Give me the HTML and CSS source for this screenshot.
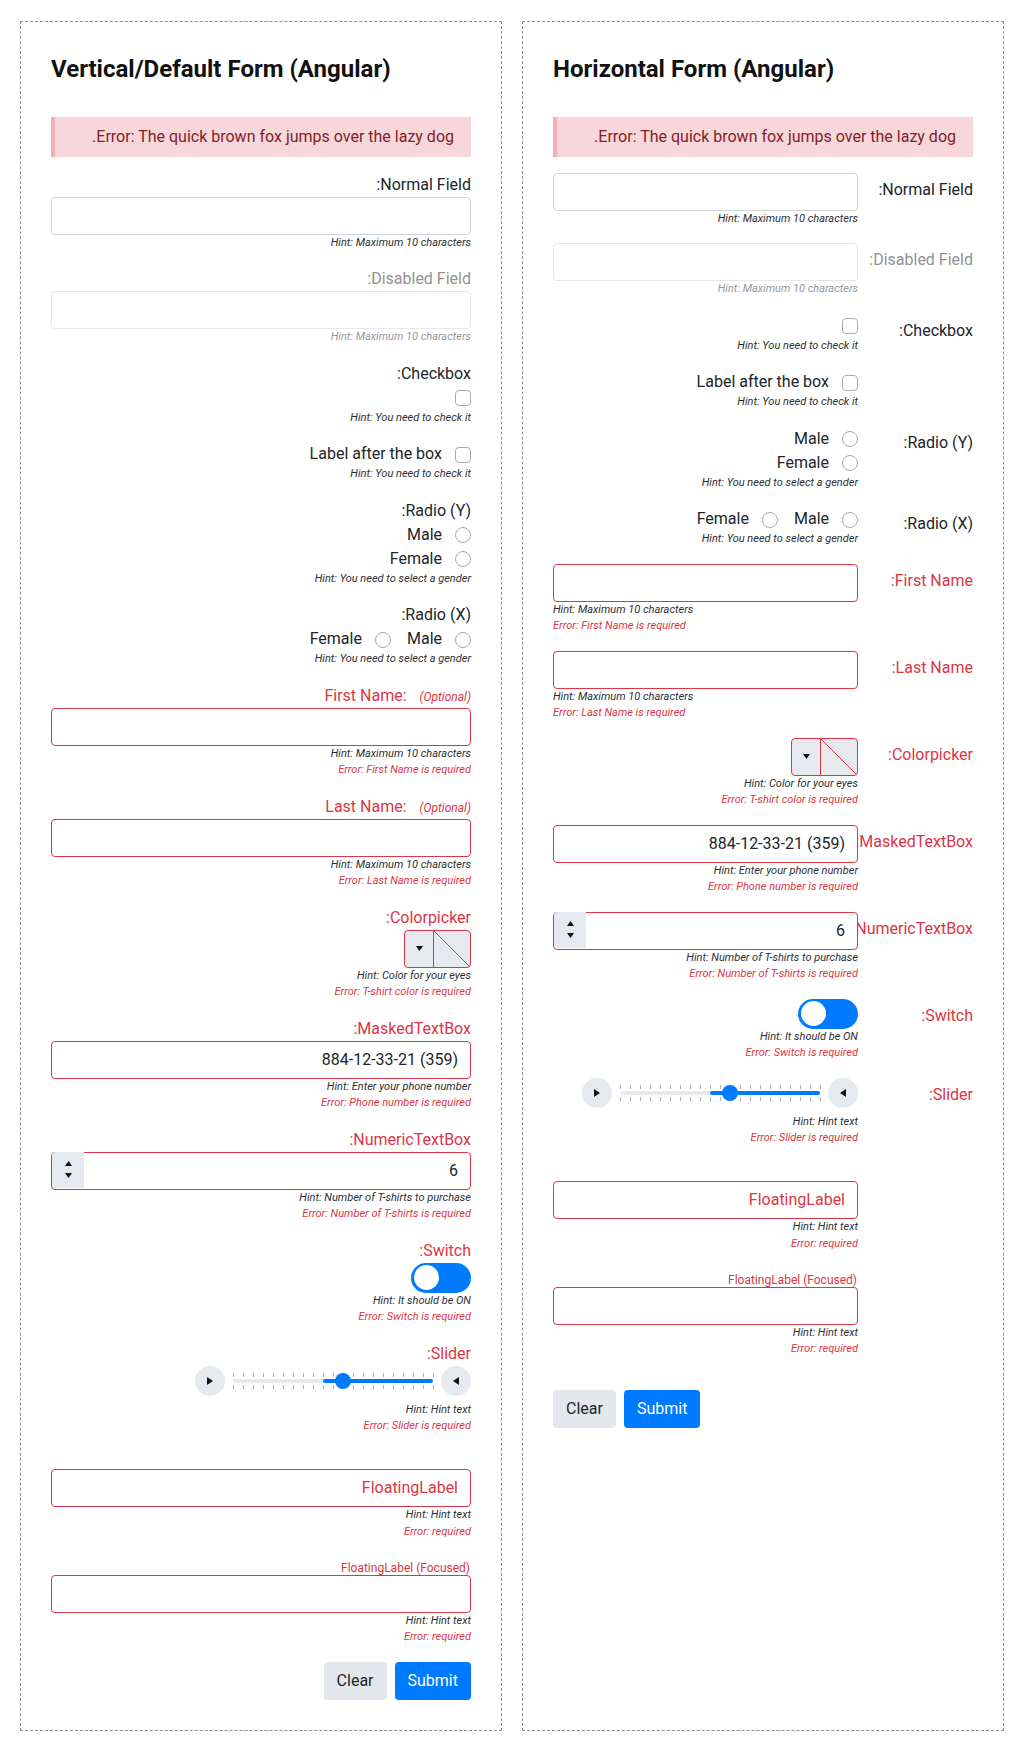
FILE: index.html
```html
<!DOCTYPE html>
<html lang="en">
<head>
<meta charset="utf-8">
<title>Forms (Angular)</title>
<link rel="stylesheet" href="styles.css">
</head>
<body>
<div class="page">

  <!-- Vertical form -->
  <section class="panel">
    <h2 class="title">Vertical/Default Form (Angular)</h2>
    <form class="form" dir="rtl">
      <div class="alert">Error: The quick brown fox jumps over the lazy dog.</div>

      <div class="group">
        <label class="lbl">Normal Field:</label>
        <div class="input"></div>
        <div class="hint">Hint: Maximum 10 characters</div>
      </div>

      <div class="group disabled">
        <label class="lbl">Disabled Field:</label>
        <div class="input"></div>
        <div class="hint">Hint: Maximum 10 characters</div>
      </div>

      <div class="group">
        <label class="lbl">Checkbox:</label>
        <div class="check-row"><span class="cb"></span></div>
        <div class="hint">Hint: You need to check it</div>
      </div>

      <div class="group">
        <div class="check-row"><span class="cb"></span><span>Label after the box</span></div>
        <div class="hint">Hint: You need to check it</div>
      </div>

      <div class="group">
        <label class="lbl">Radio (Y):</label>
        <div class="check-row"><span class="rb"></span><span>Male</span></div>
        <div class="check-row"><span class="rb"></span><span>Female</span></div>
        <div class="hint">Hint: You need to select a gender</div>
      </div>

      <div class="group">
        <label class="lbl">Radio (X):</label>
        <div class="radio-inline">
          <div class="check-row"><span class="rb"></span><span>Male</span></div>
          <div class="check-row"><span class="rb"></span><span>Female</span></div>
        </div>
        <div class="hint">Hint: You need to select a gender</div>
      </div>

      <div class="group">
        <label class="lbl err">First Name: <small class="opt">(Optional)</small></label>
        <div class="input err"></div>
        <div class="hint">Hint: Maximum 10 characters</div>
        <div class="hint err">Error: First Name is required</div>
      </div>

      <div class="group">
        <label class="lbl err">Last Name: <small class="opt">(Optional)</small></label>
        <div class="input err"></div>
        <div class="hint">Hint: Maximum 10 characters</div>
        <div class="hint err">Error: Last Name is required</div>
      </div>

      <div class="group">
        <label class="lbl err">Colorpicker:</label>
        <div class="ctl-row">
          <div class="cpick" dir="ltr">
            <span class="cp-btn"><svg width="7" height="5" viewBox="0 0 7 5"><path d="M0 0h7L3.5 5z" fill="#111"/></svg></span>
            <span class="cp-swatch"></span>
          </div>
        </div>
        <div class="hint">Hint: Color for your eyes</div>
        <div class="hint err">Error: T-shirt color is required</div>
      </div>

      <div class="group">
        <label class="lbl err">MaskedTextBox:</label>
        <div class="input err" dir="ltr"><span class="val">884-12-33-21 (359)</span></div>
        <div class="hint">Hint: Enter your phone number</div>
        <div class="hint err">Error: Phone number is required</div>
      </div>

      <div class="group">
        <label class="lbl err">NumericTextBox:</label>
        <div class="input err num" dir="ltr">
          <span class="spin">
            <svg width="7" height="5" viewBox="0 0 7 5"><path d="M0 5h7L3.5 0z" fill="#111"/></svg>
            <svg width="7" height="5" viewBox="0 0 7 5"><path d="M0 0h7L3.5 5z" fill="#111"/></svg>
          </span>
          <span class="val">6</span>
        </div>
        <div class="hint">Hint: Number of T-shirts to purchase</div>
        <div class="hint err">Error: Number of T-shirts is required</div>
      </div>

      <div class="group">
        <label class="lbl err">Switch:</label>
        <div class="ctl-row">
          <div class="switch" dir="ltr"><span class="knob"></span></div>
        </div>
        <div class="hint">Hint: It should be ON</div>
        <div class="hint err">Error: Switch is required</div>
      </div>

      <div class="group">
        <label class="lbl err">Slider:</label>
        <div class="ctl-row">
          <div class="slider" dir="ltr">
            <span class="sbtn"><svg width="6" height="8" viewBox="0 0 6 8"><path d="M0 0l6 4-6 4z" fill="#111"/></svg></span>
            <div class="strack">
              <span class="ticks ticks-top"></span>
              <span class="bar"></span>
              <span class="fill"></span>
              <span class="ticks ticks-bottom"></span>
              <span class="thumb"></span>
            </div>
            <span class="sbtn"><svg width="6" height="8" viewBox="0 0 6 8"><path d="M6 0L0 4l6 4z" fill="#111"/></svg></span>
          </div>
        </div>
        <div class="hint">Hint: Hint text</div>
        <div class="hint err">Error: Slider is required</div>
      </div>

      <div class="group fl-group">
        <div class="input err" dir="ltr"><span class="fl-text">FloatingLabel</span></div>
        <div class="hint">Hint: Hint text</div>
        <div class="hint err">Error: required</div>
      </div>

      <div class="group fl-group">
        <span class="fl-float">FloatingLabel (Focused)</span>
        <div class="input err"></div>
        <div class="hint">Hint: Hint text</div>
        <div class="hint err">Error: required</div>
      </div>

      <div class="btn-row btn-row-end" dir="ltr">
        <button type="button" class="btn btn-light">Clear</button>
        <button type="button" class="btn btn-primary">Submit</button>
      </div>
    </form>
  </section>

  <!-- Horizontal form -->
  <section class="panel">
    <h2 class="title">Horizontal Form (Angular)</h2>
    <form class="form" dir="rtl">
      <div class="alert">Error: The quick brown fox jumps over the lazy dog.</div>

      <div class="hrow">
        <label class="hlabel">Normal Field:</label>
        <div class="hctl">
          <div class="input"></div>
          <div class="hint">Hint: Maximum 10 characters</div>
        </div>
      </div>

      <div class="hrow disabled">
        <label class="hlabel">Disabled Field:</label>
        <div class="hctl">
          <div class="input"></div>
          <div class="hint">Hint: Maximum 10 characters</div>
        </div>
      </div>

      <div class="hrow">
        <label class="hlabel">Checkbox:</label>
        <div class="hctl">
          <div class="check-row"><span class="cb"></span></div>
          <div class="hint">Hint: You need to check it</div>
        </div>
      </div>

      <div class="hrow">
        <div class="hlabel"></div>
        <div class="hctl">
          <div class="check-row"><span class="cb"></span><span>Label after the box</span></div>
          <div class="hint">Hint: You need to check it</div>
        </div>
      </div>

      <div class="hrow">
        <label class="hlabel hlabel-radio">Radio (Y):</label>
        <div class="hctl">
          <div class="check-row"><span class="rb"></span><span>Male</span></div>
          <div class="check-row"><span class="rb"></span><span>Female</span></div>
          <div class="hint">Hint: You need to select a gender</div>
        </div>
      </div>

      <div class="hrow">
        <label class="hlabel">Radio (X):</label>
        <div class="hctl">
          <div class="radio-inline">
            <div class="check-row"><span class="rb"></span><span>Male</span></div>
            <div class="check-row"><span class="rb"></span><span>Female</span></div>
          </div>
          <div class="hint">Hint: You need to select a gender</div>
        </div>
      </div>

      <div class="hrow">
        <label class="hlabel err">First Name:</label>
        <div class="hctl">
          <div class="input err"></div>
          <div class="hint hint-left">Hint: Maximum 10 characters</div>
          <div class="hint err hint-left">Error: First Name is required</div>
        </div>
      </div>

      <div class="hrow">
        <label class="hlabel err">Last Name:</label>
        <div class="hctl">
          <div class="input err"></div>
          <div class="hint hint-left">Hint: Maximum 10 characters</div>
          <div class="hint err hint-left">Error: Last Name is required</div>
        </div>
      </div>

      <div class="hrow">
        <label class="hlabel err">Colorpicker:</label>
        <div class="hctl">
          <div class="ctl-row">
            <div class="cpick" dir="ltr">
              <span class="cp-btn"><svg width="7" height="5" viewBox="0 0 7 5"><path d="M0 0h7L3.5 5z" fill="#111"/></svg></span>
              <span class="cp-swatch"></span>
            </div>
          </div>
          <div class="hint">Hint: Color for your eyes</div>
          <div class="hint err">Error: T-shirt color is required</div>
        </div>
      </div>

      <div class="hrow">
        <label class="hlabel err">MaskedTextBox:</label>
        <div class="hctl">
          <div class="input err" dir="ltr"><span class="val">884-12-33-21 (359)</span></div>
          <div class="hint">Hint: Enter your phone number</div>
          <div class="hint err">Error: Phone number is required</div>
        </div>
      </div>

      <div class="hrow">
        <label class="hlabel err">NumericTextBox:</label>
        <div class="hctl">
          <div class="input err num" dir="ltr">
            <span class="spin">
              <svg width="7" height="5" viewBox="0 0 7 5"><path d="M0 5h7L3.5 0z" fill="#111"/></svg>
              <svg width="7" height="5" viewBox="0 0 7 5"><path d="M0 0h7L3.5 5z" fill="#111"/></svg>
            </span>
            <span class="val">6</span>
          </div>
          <div class="hint">Hint: Number of T-shirts to purchase</div>
          <div class="hint err">Error: Number of T-shirts is required</div>
        </div>
      </div>

      <div class="hrow">
        <label class="hlabel err">Switch:</label>
        <div class="hctl">
          <div class="ctl-row">
            <div class="switch" dir="ltr"><span class="knob"></span></div>
          </div>
          <div class="hint">Hint: It should be ON</div>
          <div class="hint err">Error: Switch is required</div>
        </div>
      </div>

      <div class="hrow">
        <label class="hlabel err">Slider:</label>
        <div class="hctl">
          <div class="ctl-row">
            <div class="slider" dir="ltr">
              <span class="sbtn"><svg width="6" height="8" viewBox="0 0 6 8"><path d="M0 0l6 4-6 4z" fill="#111"/></svg></span>
              <div class="strack">
                <span class="ticks ticks-top"></span>
                <span class="bar"></span>
                <span class="fill"></span>
                <span class="ticks ticks-bottom"></span>
                <span class="thumb"></span>
              </div>
              <span class="sbtn"><svg width="6" height="8" viewBox="0 0 6 8"><path d="M6 0L0 4l6 4z" fill="#111"/></svg></span>
            </div>
          </div>
          <div class="hint">Hint: Hint text</div>
          <div class="hint err">Error: Slider is required</div>
        </div>
      </div>

      <div class="hrow">
        <div class="hlabel"></div>
        <div class="hctl fl-group">
          <div class="input err" dir="ltr"><span class="fl-text">FloatingLabel</span></div>
          <div class="hint">Hint: Hint text</div>
          <div class="hint err">Error: required</div>
        </div>
      </div>

      <div class="hrow">
        <div class="hlabel"></div>
        <div class="hctl fl-group">
          <span class="fl-float">FloatingLabel (Focused)</span>
          <div class="input err"></div>
          <div class="hint">Hint: Hint text</div>
          <div class="hint err">Error: required</div>
        </div>
      </div>

      <div class="btn-row btn-row-start" dir="ltr">
        <button type="button" class="btn btn-light">Clear</button>
        <button type="button" class="btn btn-primary">Submit</button>
      </div>
    </form>
  </section>

</div>
</body>
</html>
```

FILE: styles.css
```css
* { box-sizing: border-box; }

html, body {
  margin: 0;
  background: #fff;
}

body {
  font-family: Roboto, "Noto Sans", "Liberation Sans", sans-serif;
  font-size: 16px;
  line-height: 1.5;
  color: #212529;
}

.page {
  display: grid;
  grid-template-columns: 482px 482px;
  column-gap: 20px;
  padding: 21px 20px 19px;
}

.panel {
  border: 1px dashed #8c8c8c;
  padding: 30px;
}

.title {
  font-size: 24px;
  font-weight: 700;
  line-height: 1.2;
  margin: 2.5px 0 33.5px;
  color: #111;
}

.form { margin: 0; }

.alert {
  background: #f8d7da;
  color: #842029;
  border-left: 4px solid #f1b0b7;
  padding: 8px 17px 8px 16px;
  margin-bottom: 16px;
}

.group { margin-bottom: 16px; }

.lbl { display: block; }
.err { color: #dc3545; }

.opt {
  font-size: 12px;
  font-style: italic;
  margin-left: 9px;
}

.input {
  height: 38px;
  border: 1px solid #ced4da;
  border-radius: 4px;
  background: #fff;
  padding: 0 12px;
  display: flex;
  align-items: center;
  justify-content: flex-end;
}
.input.err { border-color: #dc3545; }

.val { color: #212529; }

.hint {
  font-size: 11px;
  line-height: 16.5px;
  font-style: italic;
  color: #2b2f33;
}
.hint.err { color: #dc3545; }
.hint-left { text-align: left; }

.disabled { opacity: 0.5; }

/* checkbox / radio */
.check-row {
  display: flex;
  align-items: flex-start;
  gap: 13px;
  height: 24px;
}
.cb, .rb {
  flex: none;
  width: 16px;
  height: 16px;
  margin-top: 4.5px;
  border: 1px solid #a6abb0;
  background: #fff;
}
.cb { border-radius: 4px; }
.rb { border-radius: 50%; }

.radio-inline {
  display: flex;
  gap: 16px;
}

.ctl-row { display: flex; }

/* colorpicker */
.cpick {
  display: flex;
  width: 67px;
  height: 38px;
  border: 1px solid #dc3545;
  border-radius: 4px;
  background: #e6e9ed;
  overflow: hidden;
}
.cp-btn {
  width: 29px;
  border-right: 1px solid #dc3545;
  display: flex;
  align-items: center;
  justify-content: center;
}
.cp-swatch {
  flex: 1;
  background: linear-gradient(to top right, transparent calc(50% - 0.7px), #dc3545 50%, transparent calc(50% + 0.7px));
}

/* numeric */
.num { justify-content: space-between; padding-left: 0; }
.spin {
  align-self: stretch;
  width: 32px;
  margin: -1px 0 1px;
  background: #e6e9ed;
  border-radius: 4px 0 0 4px;
  display: flex;
  flex-direction: column;
  align-items: center;
  justify-content: center;
  gap: 7px;
}
.spin svg { display: block; }

/* switch */
.switch {
  width: 60px;
  height: 30px;
  border-radius: 15px;
  background: #007bff;
  display: flex;
  align-items: center;
  padding: 0 2.5px;
}
.knob {
  width: 25px;
  height: 25px;
  border-radius: 50%;
  background: #fff;
}

/* slider */
.slider {
  display: flex;
  gap: 8px;
  width: 276px;
  height: 36px;
  align-items: flex-start;
}
.sbtn {
  flex: none;
  width: 30px;
  height: 30px;
  border-radius: 50%;
  background: #e6e9ed;
  display: flex;
  align-items: center;
  justify-content: center;
}
.sbtn svg { display: block; }
.strack {
  position: relative;
  width: 200px;
  height: 30px;
}
.ticks {
  position: absolute;
  left: 0;
  width: 201px;
  height: 4px;
  background: repeating-linear-gradient(to right, #aeb1b5 0 1px, transparent 1px 10px);
}
.ticks-top { top: 7px; }
.ticks-bottom { top: 19px; }
.bar {
  position: absolute;
  left: 0;
  right: 0;
  top: 13px;
  height: 4px;
  border-radius: 2px;
  background: #e9ecef;
}
.fill {
  position: absolute;
  left: 90px;
  right: 0;
  top: 13px;
  height: 4px;
  border-radius: 2px;
  background: #007bff;
}
.thumb {
  position: absolute;
  left: 102px;
  top: 7px;
  width: 16px;
  height: 16px;
  border-radius: 50%;
  background: #007bff;
}

/* floating labels */
.fl-group {
  position: relative;
  padding-top: 18.5px;
}
.fl-text { color: #dc3545; }
.fl-float {
  position: absolute;
  top: 3px;
  right: 1px;
  font-size: 12px;
  line-height: 18px;
  color: #dc3545;
}

/* buttons */
.btn-row {
  display: flex;
  gap: 8px;
}
.btn-row-end { justify-content: flex-end; }
.btn-row-start { justify-content: flex-start; margin-top: 32px; }
.btn {
  font-family: inherit;
  font-size: 16px;
  line-height: 24px;
  padding: 6px 12px;
  border: 1px solid transparent;
  border-radius: 4px;
  cursor: pointer;
}
.btn-light { background: #e4e7eb; color: #212529; }
.btn-primary { background: #007bff; color: #fff; }

/* horizontal form */
.hrow {
  display: grid;
  grid-template-columns: minmax(0, 1fr) 305px;
  column-gap: 12px;
  margin-bottom: 16px;
}
.hlabel {
  padding-top: 5px;
  white-space: nowrap;
}
.hlabel-radio { padding-top: 4px; }
.hctl { min-width: 0; }
.hctl.fl-group { padding-top: 18.5px; }
```
